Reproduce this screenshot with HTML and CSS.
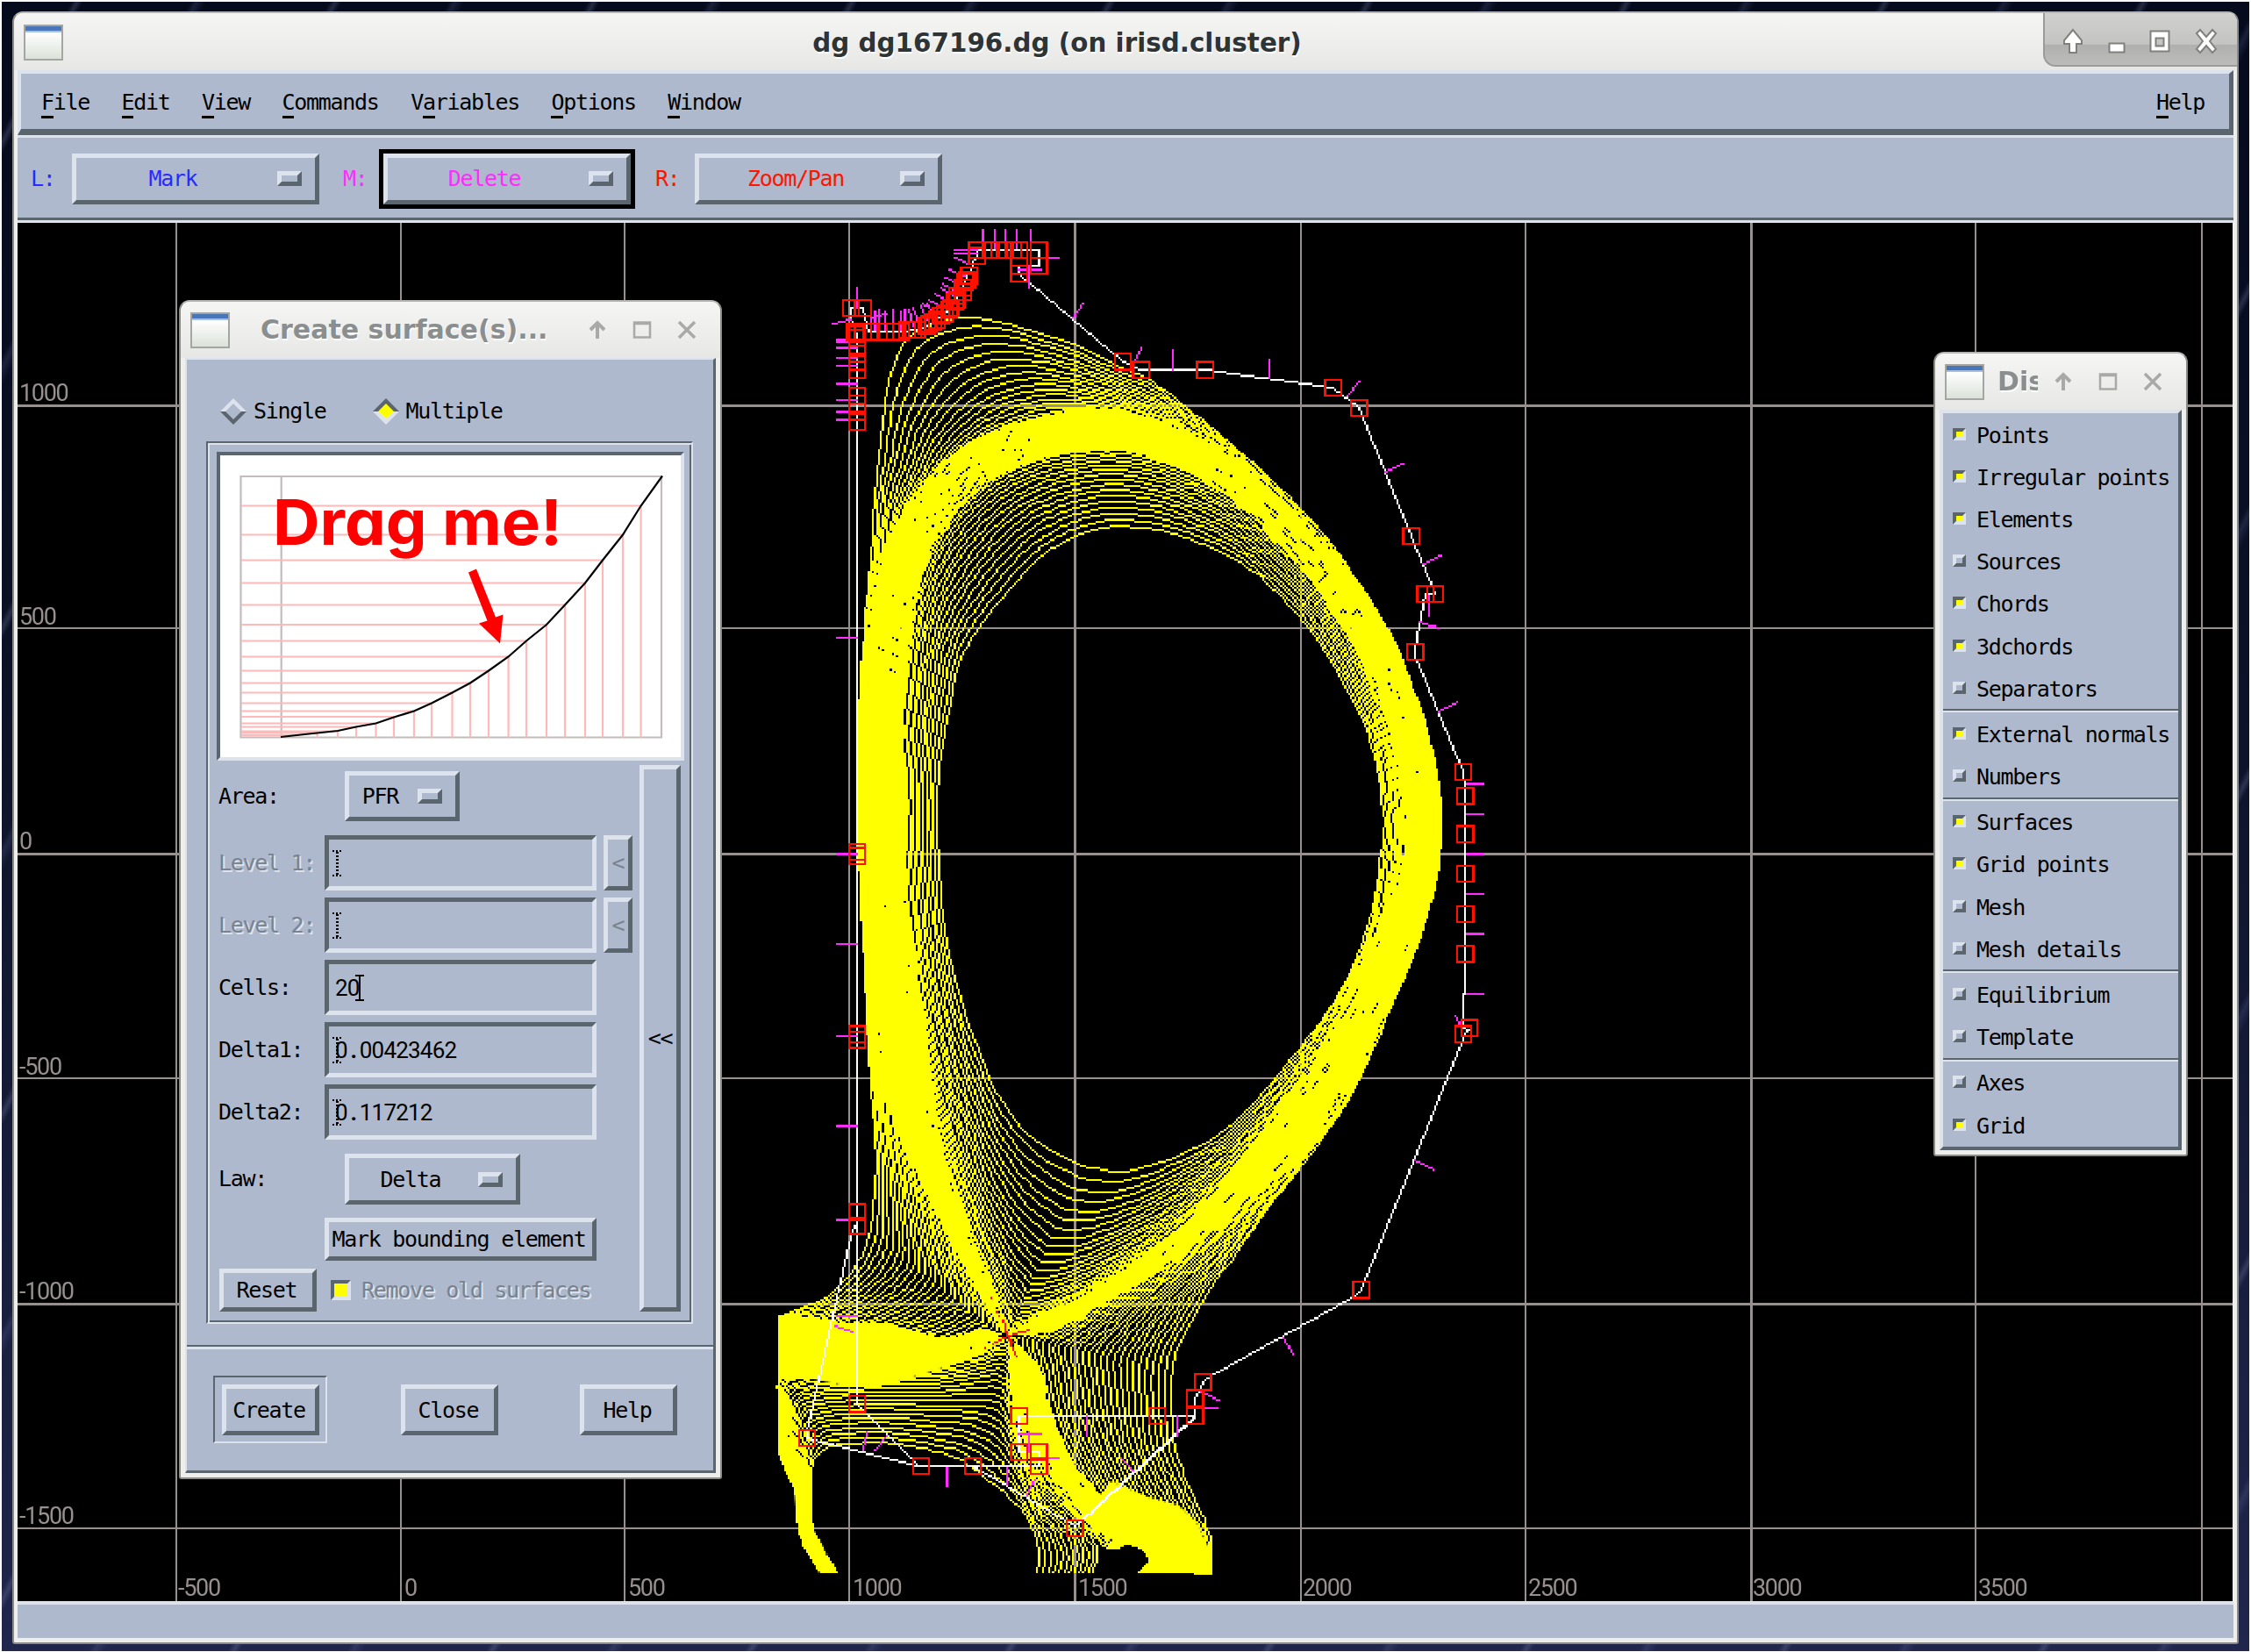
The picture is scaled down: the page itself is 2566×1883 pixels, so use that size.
FILE: index.html
```html
<!DOCTYPE html>
<html lang="en">
<head>
<meta charset="utf-8">
<title>dg dg167196.dg</title>
<link rel="stylesheet" href="styles.css">
</head>
<body>
<svg class="defs" width="0" height="0">
  <symbol id="up" viewBox="0 0 24 30"><path d="M12 2 2 14v4h6v10h8V18h6v-4z"/></symbol>
  <symbol id="thin-up" viewBox="0 0 22 22"><path d="M11 21V5M3 11l8-8 8 8" fill="none" stroke-width="4"/></symbol>
  <symbol id="thin-box" viewBox="0 0 22 22"><path d="M2 2.500h18v17H2zM2 4h18" fill="none" stroke-width="2.500"/></symbol>
  <symbol id="thin-x" viewBox="0 0 22 22"><path d="M2 2l18 18M20 2 2 20" fill="none" stroke-width="3.500"/></symbol>
</svg>
<div class="desktop">
  <main class="window main-window">
    <header class="titlebar main-title">
      <span class="app-icon"></span>
      <h1>dg dg167196.dg (on irisd.cluster)</h1>
      <div class="controls">
        <svg width="24" height="30"><use href="#up"/></svg>
        <svg width="20" height="30"><rect x="1.500" y="17.500" width="17" height="10"/></svg>
        <svg width="24" height="30"><path d="M1.500 3.500h21v23h-21zM7.500 11.500h9v9h-9z" fill-rule="evenodd"/></svg>
        <svg width="26" height="30"><path d="M2 6l4-4 7 8 7-8 4 4-7 9 7 9-4 4-7-8-7 8-4-4 7-9z"/></svg>
      </div>
    </header>
    <nav class="menubar">
      <span><u>F</u>ile</span><span><u>E</u>dit</span><span><u>V</u>iew</span><span><u>C</u>ommands</span><span>V<u>a</u>riables</span><span><u>O</u>ptions</span><span><u>W</u>indow</span><span class="help"><u>H</u>elp</span>
    </nav>
    <div class="toolbar">
      <span class="tool left">L:</span>
      <button class="raised option left"><span>Mark</span><i class="knob"></i></button>
      <span class="tool middle">M:</span>
      <button class="raised option middle focus"><span>Delete</span><i class="knob"></i></button>
      <span class="tool right">R:</span>
      <button class="raised option right"><span>Zoom/Pan</span><i class="knob"></i></button>
    </div>
    <section class="plot">
      <canvas id="plot" width="1107" height="689"></canvas>
      <svg class="axis" viewBox="20 254 2525 1571">
        <g><text x="22" y="457">1000</text><text x="22" y="712">500</text><text x="22" y="968">0</text><text x="22" y="1225">-500</text><text x="22" y="1481">-1000</text><text x="22" y="1737">-1500</text></g>
        <g><text x="203" y="1819">-500</text><text x="461" y="1819">0</text><text x="716" y="1819">500</text><text x="972" y="1819">1000</text><text x="1229" y="1819">1500</text><text x="1485" y="1819">2000</text><text x="1742" y="1819">2500</text><text x="1998" y="1819">3000</text><text x="2255" y="1819">3500</text></g>
      </svg>
    </section>
    <footer class="status"></footer>
  </main>

  <section class="window create">
    <header class="titlebar">
      <span class="app-icon"></span>
      <h2>Create surface(s)...</h2>
      <div class="thin-controls"><svg><use href="#thin-up"/></svg><svg><use href="#thin-box"/></svg><svg><use href="#thin-x"/></svg></div>
    </header>
    <div class="create-body">
      <div class="radios">
        <span><svg width="30" height="30" viewBox="0 0 30 30"><path d="M0 15 15 0l15 15h-6L15 6 6 15z" fill="#dde3ec"/><path d="M0 15l15 15 15-15h-6l-9 9-9-9z" fill="#5a656e"/></svg>Single</span>
        <span><svg width="30" height="30" viewBox="0 0 30 30"><path d="M0 15 15 0l15 15z" fill="#5a656e"/><path d="M0 15l15 15 15-15z" fill="#dde3ec"/><path d="M15 6l9 9-9 8-9-8z" fill="#ff0"/></svg>Multiple</span>
      </div>
      <div class="frame">
        <svg class="law" viewBox="251 519.500 525 344">
          <path class="gray" d="M274.500 543.500H754V841H274.500zM320.700 543.500V841"/>
          <path class="pink" d="M275 577H730M275 610H710M275 639H687M275 665H667M275 690H644M275 712.500H623M275 731H600M275 749H580M275 765H557M275 779H536M275 790H515M275 802H492M275 811H472M275 817.500H449M275 825H428M275 829H406M275 834H385M275 836H362M275 838.500H340M361.600 837V841M385 834V841M406 829V841M428.500 825V841M449 817.500V841M472 811V841M492 802V841M515.500 790V841M536 779V841M557 765V841M579.600 749V841M600 731V841M623 712.500V841M644 690V841M667 665V841M687 639V841M710 610V841M730.600 577V841"/>
          <path class="curve" d="M320 840.500 352 837 385 833.500 406 829 428.500 825 449 818 472 811 492 802 515.500 790 536 779 557 765 579.600 749 600 731 623 712.500 644 690 667 665 687 639 710 610 730.600 577 755 543"/>
          <text x="311" y="621" textLength="330" lengthAdjust="spacingAndGlyphs">Drag me!</text>
          <path fill="#f00" d="M534 653l9-4 22 55 8.500-3-3.500 33-24-23 9.500-3z"/>
        </svg>
        <div class="form">
          <div class="fields">
            <div class="row area"><label>Area:</label><button class="raised option"><span>PFR</span><i class="knob"></i></button></div>
            <div class="row off"><label>Level 1:</label><div class="sunken"><i class="caret dotted"></i></div><button class="raised small">&lt;</button></div>
            <div class="row off"><label>Level 2:</label><div class="sunken"><i class="caret dotted"></i></div><button class="raised small">&lt;</button></div>
            <div class="row"><label>Cells:</label><div class="sunken num"><span>20</span><i class="caret end"></i></div></div>
            <div class="row"><label>Delta1:</label><div class="sunken num"><i class="caret dotted over"></i><span>0<b>.</b>00423462</span></div></div>
            <div class="row last"><label>Delta2:</label><div class="sunken num"><i class="caret dotted over"></i><span>0<b>.</b>117212</span></div></div>
            <div class="row lawrow"><label>Law:</label><button class="raised option"><span>Delta</span><i class="knob"></i></button></div>
            <button class="raised bounding">Mark bounding element</button>
            <div class="resetrow"><button class="raised">Reset</button><i class="check"></i><span class="ghost">Remove old surfaces</span></div>
          </div>
          <button class="raised side">&lt;&lt;</button>
        </div>
      </div>
      <div class="actions">
        <div class="default"><button class="raised">Create</button></div>
        <button class="raised">Close</button>
        <button class="raised">Help</button>
      </div>
    </div>
  </section>

  <section class="window display">
    <header class="titlebar">
      <span class="app-icon"></span>
      <h2>Display</h2>
      <div class="thin-controls"><svg><use href="#thin-up"/></svg><svg><use href="#thin-box"/></svg><svg><use href="#thin-x"/></svg></div>
    </header>
    <div class="toggles">
      <ul><li class="on">Points</li><li class="on">Irregular points</li><li class="on">Elements</li><li>Sources</li><li class="on">Chords</li><li class="on">3dchords</li><li>Separators</li></ul>
      <ul><li class="on">External normals</li><li>Numbers</li></ul>
      <ul><li class="on">Surfaces</li><li class="on">Grid points</li><li>Mesh</li><li>Mesh details</li></ul>
      <ul><li>Equilibrium</li><li>Template</li></ul>
      <ul><li>Axes</li><li class="on">Grid</li></ul>
    </div>
  </section>
</div>
<script src="plot.js"></script>
</body>
</html>
```
FILE: styles.css
```css
* { box-sizing: border-box; }
:root { --bg: #aeb9cd; --light: #dde3ec; --dark: #5a656e; --frame: #eeeeec; }
body { margin: 0; background: #fff; color: #000; font: 25px/28px "DejaVu Sans Mono", monospace; letter-spacing: -1.300px; }
h1, h2, ul { margin: 0; padding: 0; }
button { margin: 0; padding: 0; background: var(--bg); color: inherit; font: inherit; letter-spacing: inherit; border-radius: 0; }
.defs { position: absolute; }
.desktop { position: relative; width: 2562px; height: 1880px; margin: 2px 0 0 2px; background:
  repeating-linear-gradient(118deg, transparent 0 70px, rgba(150,160,210,.22) 76px, transparent 82px 190px, rgba(120,130,190,.18) 196px, transparent 206px 260px),
  linear-gradient(#050a1c, #0b1226 40%, #20264c); }
.window { position: absolute; background: var(--frame); border-radius: 12px 12px 3px 3px; display: flex; flex-direction: column; border: 2px solid #8b8c88; border-top-color: #b5b5b2; }
.titlebar { display: flex; align-items: center; background: linear-gradient(#f5f5f4, #e7e7e5); border-radius: 10px 10px 0 0; flex: none; font-family: "DejaVu Sans", sans-serif; }
.app-icon { flex: none; width: 45px; height: 41px; border: 2px solid #a3a6a3; background: linear-gradient(#4876b8 0 5px, #a8c0e0 5px 7px, #fff 7px, #dbe2d8); }
h1, h2 { font: bold 30px/36px "DejaVu Sans", sans-serif; letter-spacing: 0; white-space: nowrap; text-shadow: 1px 2px #fff; }

.main-window { left: 12px; top: 11px; width: 2538px; height: 1861px; padding: 0 4px 5px; }
.main-title { height: 65px; padding-left: 11px; margin: 0 -4px; }
.main-title .app-icon { margin-top: 1px; }
.main-title h1 { flex: 1; text-align: center; color: #2e3436; margin: 2px -9px 0 0; font-size: 29.400px; }
.controls { align-self: flex-start; width: 221px; height: 61px; display: flex; align-items: center; justify-content: space-between; padding: 5px 22px 0 20px; background: linear-gradient(#d0d0ce, #c4c4c2 60%, #b0b0ae 61%, #bcbcba); border: solid #9b9b98; border-width: 0 0 2px 2px; border-radius: 0 10px 0 14px; }
.controls svg { fill: #fff; stroke: #80807c; stroke-width: 2; }
.menubar { flex: none; display: flex; gap: 36.500px; height: 74px; padding: 19px 28px 0 23px; background: var(--bg); border: solid; border-width: 4px 5px 7px 4px; border-color: var(--light) var(--dark) var(--dark) var(--light); }
.menubar u { text-decoration: none; border-bottom: 3px solid #000; padding-bottom: 1px; }
.help { margin-left: auto; }
.toolbar { flex: none; height: 100px; display: flex; align-items: center; background: var(--bg); border-top: 3px solid var(--light); border-bottom: 3px solid var(--light); box-shadow: inset 0 -3px var(--dark); padding: 0 0 1px 15px; }
.tool { width: 47px; }
.tool.middle { width: 46px; margin-left: 27px; }
.tool.right { width: 45px; margin-left: 28px; }
.left { color: #2a2aff; } .middle { color: #ff2bff; } .right { color: #ff1400; }
.raised { border: 5px solid; border-color: var(--light) var(--dark) var(--dark) var(--light); }
.sunken { border: 5px solid; border-color: var(--dark) var(--light) var(--light) var(--dark); }
.option { display: flex; align-items: center; }
.toolbar .option { width: 282px; height: 58px; padding-right: 15px; }
.option span { flex: 1; text-align: center; padding: 1px 7px 0 0; }
.toolbar .option span { padding-right: 9px; }
.focus { outline: 5px solid #000; }
.knob { width: 28px; height: 17px; border: 5px solid; border-color: var(--light) var(--dark) var(--dark) var(--light); }
.plot { position: relative; flex: none; width: 2525px; height: 1571px; background: #000; }
.plot canvas, .axis { position: absolute; inset: 0; width: 100%; height: 100%; }
.plot canvas { image-rendering: pixelated; }
.axis { fill: #988f8f; font: 27px Roboto, sans-serif; letter-spacing: -1.300px; }
.status { flex: 1; background: var(--bg); border-top: 4px solid var(--light); }

.create { left: 202px; top: 340px; width: 619px; height: 1344px; padding: 0 5px 5px; }
.create .titlebar { height: 64px; margin: 0 -5px; padding-left: 11px; }
h2 { color: #8a8e8f; }
.create h2 { width: 408px; padding-left: 35px; }
.thin-controls { display: flex; gap: 29px; stroke: #a9a9a7; }
.thin-controls svg { width: 22px; height: 22px; }
.create-body { flex: 1; background: var(--bg); border: solid; border-width: 2px 3px 3px 2px; border-color: var(--light) var(--dark) var(--dark) var(--light); }
.radios { display: flex; gap: 53px; height: 94px; padding: 44px 0 0 38px; }
.radios span { display: flex; gap: 8px; align-items: center; height: 30px; }
.frame { margin: -1px 23px 0 22px; height: 1006px; border: 2px solid; border-color: var(--dark) var(--light) var(--light) var(--dark); outline: 0; box-shadow: inset 2px 2px var(--light), inset -2px -2px var(--dark); padding: 10px; }
.law { display: block; width: 533px; height: 352px; background: #fff; border: 4px solid; border-color: var(--dark) var(--light) var(--light) var(--dark); }
.law path.gray, .law path.pink, .law path.curve { fill: none; stroke-width: 2.200; }
.law .gray { stroke: #c4bcbc; } .law .pink { stroke: #ffb9b9; } .law .curve { stroke: #000; }
.law text { font: bold 72px Inter, sans-serif; font-feature-settings: "cv11"; letter-spacing: 0; fill: #f00; }
.form { display: flex; gap: 8px; padding-top: 5px; }
.fields { width: 474px; }
.side { width: 47px; height: 623px; font-family: "DejaVu Sans Mono", monospace; }
.row { display: flex; height: 63px; margin-bottom: 8px; align-items: center; gap: 8px; padding-left: 2px; }
.row label { width: 113px; }
.row .sunken { width: 310px; height: 63px; display: flex; align-items: center; padding-left: 4px; }
.row.area { height: 73px; margin-bottom: 7px; align-items: flex-start; padding-top: 7px; }
.area label { padding-top: 15px; }
.area .option { width: 131px; height: 57px; padding-right: 15px; margin-left: 23px; }
.lawrow { height: 58px; margin-top: 16px; margin-bottom: 15px; }
.lawrow .option { width: 200px; height: 58px; padding-right: 15px; margin-left: 23px; }
.small { width: 33px; height: 63px; }
.off, .ghost { color: #78838f; text-shadow: 2px 2px var(--light); }
.caret { position: relative; width: 10px; height: 30px; border: solid #000; border-width: 2px 0; background: linear-gradient(#000, #000) center / 2px 100% no-repeat; }
.caret.dotted { border: dotted #000; border-width: 2px 0; background: repeating-linear-gradient(#000 0 2px, transparent 2px 4px) center / 3px 100% no-repeat; }
.caret.over { margin-right: -10px; }
.caret.end { margin-left: -5px; }
.num { font-family: Roboto, sans-serif; font-size: 26px; letter-spacing: -.8px; }
.num span { padding-left: 3px; }
.num b { display: inline-block; width: 14px; text-align: center; }
.bounding { display: block; width: 310px; height: 49px; margin-left: 123px; padding-right: 4px; white-space: nowrap; }
.resetrow { display: flex; align-items: center; height: 49px; margin-top: 9px; padding-left: 3px; }
.resetrow button { width: 111px; height: 49px; padding-right: 3px; }
.check { width: 23px; height: 23px; margin: 0 12px 0 16px; background: #ff0; border: 4px solid; border-color: var(--dark) var(--light) var(--light) var(--dark); }
.actions { display: flex; align-items: center; margin-top: 24px; padding: 30px 41px 0 30px; height: 115px; border-top: 2px solid var(--dark); box-shadow: inset 0 3px var(--light); justify-content: space-between; }
.actions .raised { width: 111px; height: 58px; padding: 2px 3px 0 0; }
.default { width: 130px; height: 77px; flex: none; display: grid; place-items: center; border: 2px solid; border-color: var(--dark) var(--light) var(--light) var(--dark); margin-right: -9px; }

.display { left: 2202px; top: 399px; width: 290px; height: 917px; padding: 0 5px 5px; }
.display .titlebar { height: 64px; margin: 0 -5px; padding-left: 11px; }
.display h2 { width: 61px; margin: 0 18px 0 0; padding-left: 15px; overflow: hidden; }
.toggles { flex: 1; background: var(--bg); border: 4px solid; border-color: var(--light) var(--dark) var(--dark) var(--light); }
ul { list-style: none; }
ul + ul { border-top: 2px solid var(--dark); box-shadow: inset 0 2px var(--light); padding-top: 2px; }
li { display: flex; align-items: center; height: 48.200px; padding: 3px 0 0 11px; gap: 12px; white-space: nowrap; }
li::before { box-sizing: border-box; content: ""; width: 15px; height: 14px; margin-top: -4px; border: 4px solid; border-color: var(--light) var(--dark) var(--dark) var(--light); background: var(--bg); }
li.on::before { background: #ff0; border-color: var(--dark) var(--light) var(--light) var(--dark); }
```
FILE: plot.js
```js
const ctx = document.getElementById('plot').getContext('2d');
const S = 2.281;
const lx = x => Math.round((x - 20) / S - 0.6);
const ly = y => Math.round((y - 254) / S - 0.5);

// One-pixel Bresenham segment on the coarse raster.
function seg(x0, y0, x1, y1) {
  x0 = lx(x0); y0 = ly(y0); x1 = lx(x1); y1 = ly(y1);
  const dx = Math.abs(x1 - x0), dy = -Math.abs(y1 - y0);
  const sx = x0 < x1 ? 1 : -1, sy = y0 < y1 ? 1 : -1;
  let e = dx + dy;
  for (;;) {
    ctx.fillRect(x0, y0, 1, 1);
    if (x0 === x1 && y0 === y1) break;
    const e2 = 2 * e;
    if (e2 >= dy) { e += dy; x0 += sx; }
    if (e2 <= dx) { e += dx; y0 += sy; }
  }
}
function poly(p) { for (let i = 1; i < p.length; i++) seg(p[i-1][0], p[i-1][1], p[i][0], p[i][1]); }
function smooth(p) {
  const out = [p[0]];
  for (let i = 0; i < p.length - 1; i++) {
    const a = p[Math.max(0, i-1)], b = p[i], c = p[i+1], d = p[Math.min(p.length-1, i+2)];
    for (let k = 1; k <= 5; k++) {
      const t = k / 5, r = j => 0.5 * (2*b[j] + (c[j]-a[j])*t + (2*a[j]-5*b[j]+4*c[j]-d[j])*t*t + (3*b[j]-a[j]-3*c[j]+d[j])*t*t*t);
      out.push([r(0), r(1)]);
    }
  }
  return out;
}
const pts = s => s.trim().split(/\s+/).map(q => q.split(',').map(Number));
const mix = (a, b, t) => [a[0] + (b[0]-a[0])*t, a[1] + (b[1]-a[1])*t];
const dist = (a, b) => Math.hypot(a[0] - b[0], a[1] - b[1]);

// Grid
ctx.fillStyle = '#000'; ctx.fillRect(0, 0, 1107, 689);
ctx.fillStyle = '#988f8f';
[202, 458, 713, 969, 1226, 1482.700, 1739, 1996, 2252.500, 2509].forEach(x => seg(x, 255, x, 1824));
[463, 717, 973, 1230, 1486, 1742].forEach(y => seg(21, y, 2544, y));

// Flux surfaces
ctx.fillStyle = '#ff0';
const ringSep = pts(`1130,1478 1098,1400 1062,1290 1040,1209 1018,1097 1006,1004 1003,900 1006,807 1016,717 1030,650 1050,600 1080,558 1110,530 1140,512 1170,500 1200,493 1230,489 1260,487 1290,490 1320,498 1350,510 1380,524 1420,550 1462,588 1503,630 1535,675 1566,722 1590,779 1611,848 1623,906 1626,930 1622,987 1608,1040 1585,1095 1553,1152 1513,1222 1455,1300 1395,1363 1322,1428 1235,1483 1175,1513`);
const ringIn = pts(`1187,1305 1153,1271 1128,1229 1097,1146 1080,1075 1071,995 1069,901 1078,834 1093,758 1108,728 1128,700 1153,670 1173,648 1193,630 1210,620 1227,611 1250,604 1273,600 1303,602 1325,605 1347,611 1370,619 1393,629 1430,652 1462,682 1492,716 1520,759 1550,813 1567,863 1577,923 1578,945 1575,973 1565,1037 1547,1091 1520,1144 1483,1194 1443,1243 1400,1287 1355,1312 1317,1328 1275,1336`);
for (let i = 0; i <= 26; i++) {
  const t = Math.pow(i / 26, 1.750), c = mix([1150,1522], [1235,1330], t);
  poly(smooth([c, ...ringSep.map((p, k) => mix(p, ringIn[k], t)), c]));
}
// Surfaces crowded against the separatrix merge into a solid band.
const coreBand = ringSep.map((p, k) => Math.min(0.45, (k < 3 || k > 36 ? 9 : 26) / dist(p, ringIn[k])));
for (let i = 0; i <= 24; i++)
  poly(smooth([[1150,1522], ...ringSep.map((p, k) => mix(p, ringIn[k], coreBand[k] * i / 24)), [1150,1522]]));

const solSep = pts(`888,1556 940,1558 1000,1555 1050,1552 1100,1544 1135,1532 1148,1521`).concat(ringSep, pts(`1152,1524 1160,1556 1168,1595 1182,1635 1202,1675 1228,1714 1262,1744 1300,1765 1325,1793`));
const solOut = pts(`888,1501 915,1491 938,1482 960,1463 978,1440 988,1418 993,1400 996,1370 999,1325 996,1270 991,1209 986,1097 981,1004 979,900 980,807 987,700 994,630 998,560 1003,517 1008,467 1013,437 1022,408 1042,380 1093,362 1150,369 1223,393 1270,415 1312,434 1353,465 1393,497 1440,538 1483,581 1520,623 1578,710 1607,774 1630,845 1642,906 1643,930 1640,987 1627,1044 1607,1101 1580,1162 1547,1237 1507,1300 1448,1376 1403,1438 1370,1486 1343,1538 1337,1565 1335,1593 1337,1625 1340,1655 1350,1682 1360,1706 1373,1734 1381,1760 1380,1794`);
const power = k => k < 9 ? 1.150 : k < 18 ? 1.150 + (k-9)*0.14 : k < 28 ? 2.400 : k < 47 ? 2.400 - (k-28)*0.065 : 1.150;
for (let i = 0; i <= 28; i++)
  poly(smooth(solSep.map((p, k) => mix(p, solOut[k], Math.pow(i / 28, power(k))))));
const solBand = solSep.map((p, k) => Math.min(1, (k < 4 ? 60 : k < 6 ? 26 : k === 6 || k === 48 ? 5 : k === 7 ? 22 : k < 10 ? 42 : k > 52 ? 34 : 26) / dist(p, solOut[k])));
for (let i = 0; i <= 40; i++)
  poly(smooth(solSep.map((p, k) => mix(p, solOut[k], solBand[k] * i / 40))));

// Private flux region: the tails split round the bay by the right target
const legSep = pts(`936,1793 919,1767 910,1740 906,1700 889,1653 889,1600 889,1572 920,1560 970,1557 1030,1554 1080,1549 1120,1538 1148,1527 1158,1556 1166,1595 1180,1635 1200,1675`);
const legIn = pts(`954,1793 936,1760 926,1740 925,1700 925,1673 934,1658 952,1648 975,1646 1005,1645 1035,1648 1067,1655 1097,1665 1126,1687 1143,1700 1156,1712 1168,1727 1178,1745`);
const tailS = pts(`1228,1714 1262,1744 1290,1748 1315,1752 1330,1768 1335,1780 1335,1793`);
const tailR = pts(`1222,1722 1252,1756 1268,1766 1290,1761 1305,1770 1310,1780 1298,1793`);
const tailQ = pts(`1218,1718 1240,1742 1254,1770 1248,1793`);
const tailP = pts(`1181,1752 1184,1765 1185,1780 1182,1793`);
for (let i = 0; i <= 22; i++) {
  const t = Math.pow(i / 22, 1.500), near = i <= 10, lim = Math.pow(10.5 / 22, 1.500);
  const tail = near ? tailS.map((p, k) => mix(p, tailR[k], t / Math.pow(10/22, 1.500)))
                    : tailQ.map((p, k) => mix(p, tailP[k], (t - lim) / (1 - lim)));
  poly(smooth([...legSep.map((p, k) => mix(p, legIn[k], t)), ...tail]));
}
function area(s) {
  ctx.beginPath();
  pts(s).forEach(p => ctx.lineTo(lx(p[0]), ly(p[1])));
  ctx.fill();
}
area('1240,1725 1270,1690 1310,1708 1345,1718 1365,1735 1383,1775 1381,1795 1299,1795 1312,1780 1305,1768 1290,1759 1262,1757');
area('906,1700 926,1700 928,1742 938,1762 955,1795 937,1795 919,1767 910,1740');
area('888,1501 888,1574 930,1574 960,1580 1008,1580 1050,1568 1100,1552 1120,1540 1050,1545 1000,1535');

// X-point marker
ctx.fillStyle = '#000';
[[1138,1523,1164,1523],[1142,1519,1158,1530],[1146,1527,1162,1518],[1146,1515,1156,1535]].forEach(q => seg(...q));
ctx.fillStyle = '#f10';
[[1143,1506,1148,1520],[1148,1520,1158,1543],[1132,1532,1150,1523],[1150,1523,1174,1516],[1146,1518,1155,1530]].forEach(q => seg(...q));
[[1130,1481],[1136,1495],[1140,1500],[1123,1536],[1159,1546]].forEach(q => seg(...q, ...q));

// Wall outline
ctx.fillStyle = '#fff';
poly(pts(`978,1600 1047,1672 1185,1672 1185,1655 1161,1655 1161,1614 1363,1614 1363,1593 1372,1575 1380,1568 1546,1478 1552,1470 1670,1179 1676,1174 1668,1172 1668,1134 1670,1134 1670,893 1668,880 1613,748 1613,738 1625,678 1637,676 1631,665 1608,612 1549,465 1519,442 1373,422 1300,422 1281,412 1162,313 1162,303 1185,303 1185,284 1113,284 1113,290 1110,300 1103,317 1093,337 1083,353 1067,367 1047,375 1022,378 990,378 985,350 971,350 971,362 978,383 978,1600`));
poly(pts('978,1395 971,1410 919,1633 921,1639 1047,1672'));
poly(pts('1110,1672 1226,1740 1363,1614'));
seg(1230, 1738, 1363, 1616);

// Outward normals
ctx.fillStyle = '#ff2bff';
[387,389,397,408,417,438,456,470,479,727,973,1076,1182,1285,1392,1500].forEach(y => seg(955, y, 976, y));
[893,929,973.500,1019,1065,1134].forEach(y => seg(1672, y, 1692, y));
[1120,1134,1146,1159,1175].forEach(x => seg(x, 261, x, 283));
[993,997,1003,1009,1019,1027,1031].forEach((x, i) => seg(x, 353 + (i % 2) * 3, x, 376));
pts(`950,369,970,365 951,1513,973,1519 989,1634,984,1654 1012,1637,997,1653 1079,1673,1079,1695 1148,1673,1148,1693 1180,1687,1171,1706 1173,1632,1173,1655 1163,1635,1186,1635 1187,1662,1208,1662 1240,1615,1240,1638 1342,1615,1342,1638 1278,1662,1293,1676 1370,1587,1390,1597 1374,1605,1387,1605 1463,1526,1474,1544 1613,1323,1634,1333 1658,1158,1667,1170 1640,811,1662,801 1618,710,1642,715 1629,679,1629,702 1623,644,1643,634 1579,539,1600,529 1535,451,1549,435 1446,431,1448,410 1338,399,1338,421 1294,412,1302,396 1223,362,1236,346 1194,293,1208,293 1162,307,1186,307 1173,303,1173,327 1090,284,1113,284 1090,289,1113,289 1088,293,1105,301 1081,307,1100,314 1078,316,1094,323 1076,324,1090,330 1072,329,1087,337 1067,336,1083,345 1060,341,1077,352 1053,347,1070,358 1056,346,1066,360 1050,349,1058,364 1042,352,1048,370 1037,354,1042,372 978,327,978,350 993,362,1012,358`).forEach(q => seg(...q));

// Point markers
ctx.fillStyle = '#f10';
function box(x, y) {
  const a = lx(x) - 4, b = ly(y) - 4;
  ctx.fillRect(a, b, 9, 1); ctx.fillRect(a, b + 8, 9, 1); ctx.fillRect(a, b, 1, 9); ctx.fillRect(a + 8, b, 1, 9);
}
pts(`971,351 985,351 975,378 978,378 978,381 978,386 978,396 978,404 978,412 978,422 978,451 978,461 978,470 978,481 978,972 978,975 978,1178 978,1186 978,1383 978,1399 978,1600
919,1639 1049,1671 1109,1671 1185,1655 1185,1672 1161,1655 1161,1614 1320,1614 1363,1614 1363,1593 1372,1575 1226,1742 1551,1472 1668,1179 1675,1172
1670,1087 1670,1042 1670,996 1670,950 1670,907 1668,880 1613,744 1625,678 1637,678 1608,612 1549,465 1519,442 1373,422 1302,422 1281,412
1162,312 1162,303 1185,303 1185,284 1113,284 1113,291 1130,284 1138,284 1146,284 1155,284 1163,284
1104,314 1102,318 1100,321 1098,327 1097,333 1092,337 1092,342 1089,345 1085,350 1081,354 1077,358 1072,361 1068,364 1064,367 1059,370 1056,371 1045,375 1040,376 1034,377 1027,378 1021,378 1008,378 1003,378 992,378 985,378`).forEach(q => box(...q));
```
